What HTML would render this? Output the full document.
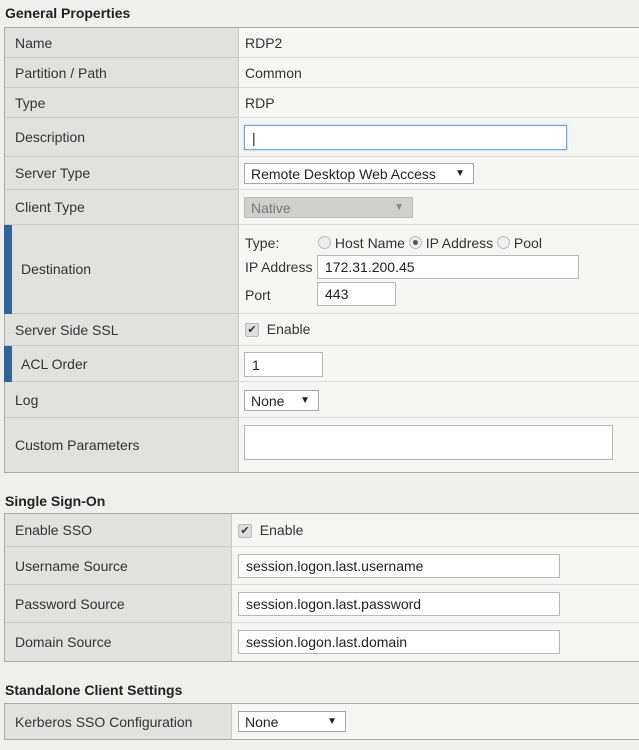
<!DOCTYPE html>
<html><head><meta charset="utf-8"><style>
body{margin:0;width:639px;height:750px;background:#efefed;font-family:"Liberation Sans",Arial,sans-serif;font-size:14px;color:#333;position:relative;overflow:hidden}
.a{position:absolute}
.h{font-weight:bold;font-size:14px;color:#222;left:5px}
.lab{position:absolute;background:#e1e1df;border-bottom:1px solid #c8c8c6;box-sizing:border-box;padding-left:10px;display:flex;align-items:center}
.val{position:absolute;background:#f6f6f4;border-bottom:1px solid #dcdcda;box-sizing:border-box}
.inp{position:absolute;background:#fff;border:1px solid #b8b8b8;box-sizing:border-box;padding-left:7px;display:flex;align-items:center;color:#222}
.sel{position:absolute;background:#fff;border:1px solid #a9a9a9;box-sizing:border-box;padding-left:6px;display:flex;align-items:center;color:#222}
.sel span.ar{position:absolute;right:8px;font-size:10px}
.bar{position:absolute;left:4px;width:8px;background:#2e6496}
.cb{display:inline-block;width:12px;height:12px;background:#ddd;border:1px solid #bbb;border-radius:2px;font-size:11px;line-height:12px;text-align:center;color:#333;vertical-align:middle}
.rd{display:inline-block;width:11px;height:11px;border:1px solid #bbb;border-radius:50%;background:#eee;vertical-align:-1px;position:relative}
.rd.on::after{content:"";position:absolute;left:3px;top:3px;width:5px;height:5px;border-radius:50%;background:#555}
.frame{position:absolute;border:1px solid #a9a9a7;box-sizing:border-box}
</style></head><body>
<div class="a h" style="top:5px">General Properties</div>
<div class="frame" style="left:4px;top:27px;width:640px;height:446px"></div>
<div class="lab" style="left:5px;top:28px;width:233px;height:30px">Name</div><div class="val" style="left:238px;top:28px;width:401px;height:30px;border-left:1px solid #c8c8c6"></div><div class="a" style="left:245px;top:35px">RDP2</div>
<div class="lab" style="left:5px;top:58px;width:233px;height:30px">Partition / Path</div><div class="val" style="left:238px;top:58px;width:401px;height:30px;border-left:1px solid #c8c8c6"></div><div class="a" style="left:245px;top:65px">Common</div>
<div class="lab" style="left:5px;top:88px;width:233px;height:30px">Type</div><div class="val" style="left:238px;top:88px;width:401px;height:30px;border-left:1px solid #c8c8c6"></div><div class="a" style="left:245px;top:95px">RDP</div>
<div class="lab" style="left:5px;top:118px;width:233px;height:39px">Description</div><div class="val" style="left:238px;top:118px;width:401px;height:39px;border-left:1px solid #c8c8c6"></div>
<div class="inp" style="left:244px;top:125px;width:323px;height:25px;border:1px solid #7aa3d6;box-shadow:0 0 2px #9bbde6">|</div>
<div class="lab" style="left:5px;top:157px;width:233px;height:33px">Server Type</div><div class="val" style="left:238px;top:157px;width:401px;height:33px;border-left:1px solid #c8c8c6"></div>
<div class="sel" style="left:244px;top:163px;width:230px;height:21px">Remote Desktop Web Access<span class="ar">▼</span></div>
<div class="lab" style="left:5px;top:190px;width:233px;height:35px">Client Type</div><div class="val" style="left:238px;top:190px;width:401px;height:35px;border-left:1px solid #c8c8c6"></div>
<div class="sel" style="left:244px;top:197px;width:169px;height:21px;background:#cfcfcd;color:#777;border-color:#bbb">Native<span class="ar" style="color:#888">▼</span></div>
<div class="lab" style="left:5px;top:225px;width:233px;height:89px;padding-left:16px">Destination</div><div class="bar" style="top:225px;height:89px"></div><div class="val" style="left:238px;top:225px;width:401px;height:89px;border-left:1px solid #c8c8c6"></div>
<div class="a" style="left:245px;top:235px">Type:</div>
<div class="a" style="left:318px;top:235px"><span class="rd"></span> Host Name <span class="rd on"></span> IP Address <span class="rd"></span> Pool</div>
<div class="a" style="left:245px;top:259px">IP Address</div>
<div class="inp" style="left:317px;top:255px;width:262px;height:24px">172.31.200.45</div>
<div class="a" style="left:245px;top:287px">Port</div>
<div class="inp" style="left:317px;top:282px;width:79px;height:24px">443</div>
<div class="lab" style="left:5px;top:314px;width:233px;height:32px">Server Side SSL</div><div class="val" style="left:238px;top:314px;width:401px;height:32px;border-left:1px solid #c8c8c6"></div>
<div class="a" style="left:245px;top:321px"><span class="cb">✔</span>&nbsp; Enable</div>
<div class="lab" style="left:5px;top:346px;width:233px;height:36px;padding-left:16px">ACL Order</div><div class="bar" style="top:346px;height:36px"></div><div class="val" style="left:238px;top:346px;width:401px;height:36px;border-left:1px solid #c8c8c6"></div>
<div class="inp" style="left:244px;top:352px;width:79px;height:25px">1</div>
<div class="lab" style="left:5px;top:382px;width:233px;height:36px">Log</div><div class="val" style="left:238px;top:382px;width:401px;height:36px;border-left:1px solid #c8c8c6"></div>
<div class="sel" style="left:244px;top:390px;width:75px;height:21px">None<span class="ar">▼</span></div>
<div class="lab" style="left:5px;top:418px;width:233px;height:54px;border-bottom:none">Custom Parameters</div><div class="val" style="left:238px;top:418px;width:401px;height:54px;border-left:1px solid #c8c8c6;border-bottom:none"></div>
<div class="inp" style="left:244px;top:425px;width:369px;height:35px"></div>

<div class="a h" style="top:493px">Single Sign-On</div>
<div class="frame" style="left:4px;top:513px;width:640px;height:149px"></div>
<div class="lab" style="left:5px;top:514px;width:226px;height:33px">Enable SSO</div><div class="val" style="left:231px;top:514px;width:408px;height:33px;border-left:1px solid #c8c8c6"></div>
<div class="a" style="left:238px;top:522px"><span class="cb">✔</span>&nbsp; Enable</div>
<div class="lab" style="left:5px;top:547px;width:226px;height:38px">Username Source</div><div class="val" style="left:231px;top:547px;width:408px;height:38px;border-left:1px solid #c8c8c6"></div>
<div class="inp" style="left:238px;top:554px;width:322px;height:24px">session.logon.last.username</div>
<div class="lab" style="left:5px;top:585px;width:226px;height:38px">Password Source</div><div class="val" style="left:231px;top:585px;width:408px;height:38px;border-left:1px solid #c8c8c6"></div>
<div class="inp" style="left:238px;top:592px;width:322px;height:24px">session.logon.last.password</div>
<div class="lab" style="left:5px;top:623px;width:226px;height:38px;border-bottom:none">Domain Source</div><div class="val" style="left:231px;top:623px;width:408px;height:38px;border-left:1px solid #c8c8c6;border-bottom:none"></div>
<div class="inp" style="left:238px;top:630px;width:322px;height:24px">session.logon.last.domain</div>

<div class="a h" style="top:682px">Standalone Client Settings</div>
<div class="frame" style="left:4px;top:703px;width:640px;height:37px"></div>
<div class="lab" style="left:5px;top:704px;width:226px;height:35px;border-bottom:none">Kerberos SSO Configuration</div><div class="val" style="left:231px;top:704px;width:408px;height:35px;border-left:1px solid #c8c8c6;border-bottom:none"></div>
<div class="sel" style="left:238px;top:711px;width:108px;height:21px">None<span class="ar">▼</span></div>
</body></html>
